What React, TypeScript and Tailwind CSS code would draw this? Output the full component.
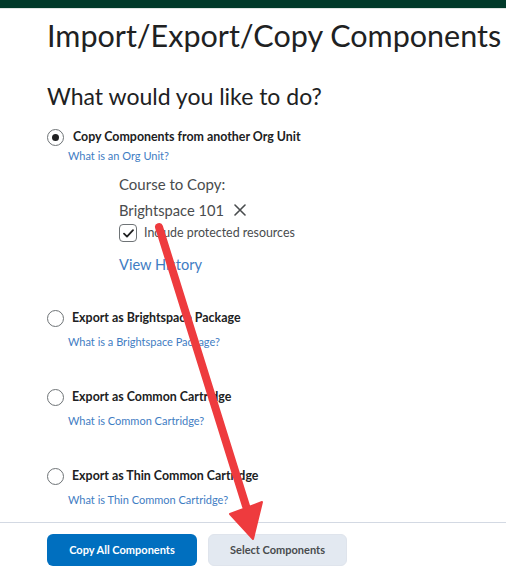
import React from "react";

const options = [
  { label: "Export as Brightspace Package", help: "What is a Brightspace Package?" },
  { label: "Export as Common Cartridge", help: "What is Common Cartridge?" },
  { label: "Export as Thin Common Cartridge", help: "What is Thin Common Cartridge?" },
];

function Radio({ checked }: { checked?: boolean }) {
  return (
    <span className="flex h-[17px] w-[17px] shrink-0 items-center justify-center rounded-full border border-[#6e7376] bg-white">
      {checked && <span className="h-[7px] w-[7px] rounded-full bg-[#202122]" />}
    </span>
  );
}

export default function App() {
  return (
    <div
      className="relative flex h-[568px] w-[506px] flex-col overflow-hidden bg-white text-[#202122]"
      style={{ fontFamily: "Lato, 'Open Sans', sans-serif" }}
    >
      <div className="h-[8px] shrink-0 border-b border-[#dfe6e3] bg-[#013a2a] box-content" />

      <main className="flex-1 pl-[47px]">
        <h1 className="mt-[8px] whitespace-nowrap text-[30.5px] leading-[37px] font-normal">
          Import/Export/Copy Components
        </h1>
        <h2 className="mt-[28px] text-[23px] leading-[28px] font-normal">What would you like to do?</h2>

        <div className="mt-[18px]">
          <div className="flex h-[18px] items-center gap-[9px]">
            <Radio checked />
            <span className="text-[12.4px] leading-[18px] font-bold text-[#202122]">
              Copy Components from another Org Unit
            </span>
          </div>
          <a className="mt-[3px] ml-[21px] block text-[11px] leading-[14px] text-[#3f7dc3]">What is an Org Unit?</a>

          <div className="ml-[72px] mt-[12px] text-[#494c4e]">
            <div className="text-[15px] leading-[18px]">Course to Copy:</div>
            <div className="mt-[8px] flex items-center gap-[10px] text-[14.7px] leading-[18px]">
              <span>Brightspace 101</span>
              <svg width="12" height="12" viewBox="0 0 12 12" className="text-[#494c4e]">
                <path d="M1 1 L11 11 M11 1 L1 11" stroke="currentColor" strokeWidth="1.6" strokeLinecap="round" />
              </svg>
            </div>
            <div className="mt-[5px] flex items-start gap-[7px]">
              <span className="flex h-[18px] w-[18px] items-center justify-center rounded-[4px] border border-[#6e7376] bg-white">
                <svg width="11" height="9" viewBox="0 0 11 9">
                  <path d="M1 4.6 L4 7.6 L10 1.2" fill="none" stroke="#202122" strokeWidth="1.8" strokeLinecap="round" strokeLinejoin="round" />
                </svg>
              </span>
              <span className="mt-[3px] text-[12.4px] leading-[12px]">Include protected resources</span>
            </div>
            <a className="mt-[13px] block text-[14.6px] leading-[19px] text-[#3f7dc3]">View History</a>
          </div>
        </div>

        <div className="mt-[35px] flex flex-col gap-[39px]">
          {options.map((o) => (
            <div key={o.label}>
              <div className="flex h-[18px] items-center gap-[8px]">
                <Radio />
                <span className="text-[12.4px] leading-[18px] font-bold text-[#202122]">{o.label}</span>
              </div>
              <a className="mt-[8px] ml-[21px] block text-[11px] leading-[14px] text-[#3f7dc3]">{o.help}</a>
            </div>
          ))}
        </div>
      </main>

      <footer className="flex h-[46px] shrink-0 items-start gap-[11px] border-t border-[#d3d9e3] pl-[47px] pt-[11px]">
        <button className="h-[32px] w-[150px] rounded-[6px] bg-[#006fbf] text-[11px] font-bold text-white">
          Copy All Components
        </button>
        <button className="h-[32px] w-[139px] rounded-[6px] border border-[#dfe4ec] bg-[#e3e9f1] text-[11px] font-bold text-[#494c4e]">
          Select Components
        </button>
      </footer>

      <svg className="pointer-events-none absolute inset-0" width="506" height="568" viewBox="0 0 506 568">
        <line x1="159" y1="227" x2="246" y2="506" stroke="#ee3b3e" strokeWidth="8" strokeLinecap="round" />
        <polygon points="230,514 262,502 253,539" fill="#ee3b3e" stroke="#ee3b3e" strokeWidth="2" strokeLinejoin="round" />
      </svg>
    </div>
  );
}
